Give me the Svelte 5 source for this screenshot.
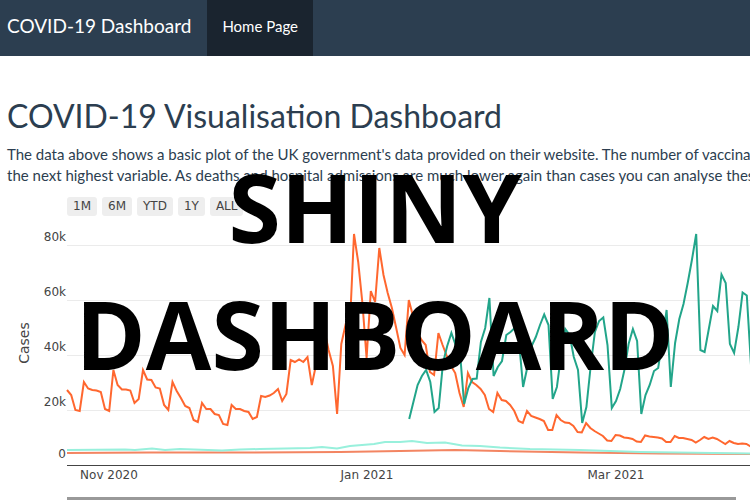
<script>
  const ranges = ['1M', '6M', 'YTD', '1Y', 'ALL'];
  const gridLines = [
    { y: 245, label: '80k' },
    { y: 300, label: '60k' },
    { y: 355, label: '40k' },
    { y: 410, label: '20k' }
  ];
  const months = [
    { x: 109, label: 'Nov 2020' },
    { x: 367, label: 'Jan 2021' },
    { x: 616, label: 'Mar 2021' }
  ];

  // daily readings, one every DAY units along the axis
  const DAY = 4.22;
  const line = (start, values) =>
    values.map((v, i) => `${(start + i * DAY).toFixed(1)},${v}`).join(' ');

  const cases = line(67, [
    390, 395, 410, 411, 382, 388.5, 390, 390.5, 392, 409, 411, 370, 385, 389.5,
    389.5, 390.5, 403, 399, 370, 379.5, 380, 387.5, 388.5, 405, 410, 382, 391,
    398, 406, 408, 420, 422, 403, 409, 409, 414, 415, 424, 425, 405, 409, 409,
    411, 412, 419, 417, 396, 397, 395.5, 393, 389, 401, 394, 360, 362, 359.5,
    362, 357, 385, 365, 322, 330, 350, 366, 414, 344, 325, 330, 234, 262, 303,
    358, 291, 302, 248, 275, 293, 308, 328, 348, 355, 300, 316, 332, 340,
    345, 372, 375, 333, 345, 356, 366, 373, 393, 407, 373, 382, 385, 389, 395,
    409, 412, 393, 400, 401, 405, 411, 421, 423, 411, 416, 417.5, 419, 421, 430,
    430, 415, 420, 422.5, 423, 426, 432, 432.5, 423, 428, 431, 433.5, 436,
    440.5, 441, 435, 435.5, 437.5, 438, 439, 441.5, 442, 435.5, 436.5, 437,
    437.5, 438.5, 442, 442, 436, 438, 438, 439, 440, 442.5, 440, 437, 439,
    437.5, 439, 441.5, 444, 441, 443, 444, 443.5, 444, 446.5
  ]);

  const vaccinations = line(409.2, [
    419, 402, 385, 376, 370, 382, 412, 408, 363, 346, 333, 345, 350, 404, 388,
    379, 378.5, 342, 328, 298, 376, 367, 361, 335, 332, 328, 340, 387, 367, 346,
    337, 325, 314.5, 325, 399, 387, 355, 329, 335, 357, 370, 423, 407, 366,
    332, 321, 317.5, 345, 408, 401, 389, 370, 344, 329, 341, 414, 395, 385, 371,
    368, 340, 310, 387, 343, 319, 304, 283, 260, 234, 350, 352, 329, 306, 311,
    274.5, 283, 344, 353, 327, 292.5, 295.5, 365
  ]);

  const admissions =
    '67,450 125,449.5 135,450 152,448.5 165,450 180,449 222,450.5 240,449.5 260,449 310,448 322,447 337,448.5 350,446 362,445 374,444 385,442 400,442 412,441 427,443 445,442.5 462,445.5 480,446 500,447.5 530,449 580,450 640,452 750,453.5';
  const deaths = '67,453 150,452.5 250,452.5 340,452 400,451 455,450 500,451 580,452.5 660,453.5 750,454';
</script>

<div class="page">
  <nav>
    <a class="brand" href="#top">COVID-19 Dashboard</a>
    <a class="tab" href="#home">Home Page</a>
  </nav>

  <main>
    <h1>COVID-19 Visualisation Dashboard</h1>
    <p>
      The data above shows a basic plot of the UK government's data provided on their website. The number of vaccinations<br />
      the next highest variable. As deaths and hospital admissions are much lower again than cases you can analyse these
    </p>

    <div class="ranges">
      {#each ranges as range}
        <button type="button">{range}</button>
      {/each}
    </div>

    <svg class="chart" viewBox="0 216 750 284" preserveAspectRatio="xMinYMin slice" role="img" aria-label="Cases over time">
      {#each gridLines as g}
        <rect x="67" y={g.y} width="683" height="1" fill="#ebebeb" />
        <text x="66" y={g.y - 4} text-anchor="end">{g.label}</text>
      {/each}
      <text x="66" y="458" text-anchor="end">0</text>
      <text class="axis" transform="translate(29 343) rotate(-90)" text-anchor="middle">Cases</text>

      <polyline points={deaths} stroke="#f38562" />
      <polyline points={admissions} stroke="#98f0dc" />
      <polyline points={cases} stroke="#ff672f" />
      <polyline points={vaccinations} stroke="#22a58a" />

      <rect x="67" y="465" width="683" height="1" fill="#444" />
      {#each months as m}
        <text x={m.x} y="479" text-anchor="middle">{m.label}</text>
      {/each}
      <rect x="67" y="497" width="669" height="3" fill="#999" />
    </svg>
  </main>

  <div class="caption">SHINY<br />DASHBOARD</div>
</div>

<style>
  :global(body) {
    margin: 0;
    background: #fff;
  }
  .page {
    position: relative;
    overflow: hidden;
    color: #2c3e50;
    font: 15px/21px Lato, sans-serif;
  }
  nav {
    display: flex;
    height: 56px;
    background: #2c3e50;
  }
  nav a {
    display: flex;
    align-items: center;
    color: #fff;
    text-decoration: none;
  }
  .brand {
    padding: 0 16px 5px 7px;
    font-size: 19px;
  }
  .tab {
    padding: 0 15px 4px;
    background: #1a242f;
  }
  main {
    padding-top: 40px;
  }
  h1 {
    margin: 0 7px 8px;
    font-size: 32px;
    line-height: 40px;
    font-weight: 400;
  }
  p {
    margin: 0 0 11px 7px;
    white-space: nowrap;
  }
  .ranges {
    display: flex;
    gap: 5px;
    padding-left: 67px;
  }
  button {
    height: 19px;
    padding: 0 6px;
    border: 0;
    border-radius: 3px;
    background: #eee;
    color: #444;
    font: 12px/17px "DejaVu Sans", Verdana, sans-serif;
  }
  .chart {
    display: block;
    width: 100%;
  }
  .chart text {
    fill: #444;
    font: 12px "DejaVu Sans", Verdana, sans-serif;
  }
  .chart .axis {
    font-size: 14px;
  }
  polyline {
    fill: none;
    stroke-width: 2;
  }
  .caption {
    position: absolute;
    top: 143px;
    left: 0;
    right: 0;
    text-align: center;
    color: #000;
    font: 700 95px/127px "Open Sans", "Noto Sans", sans-serif;
    pointer-events: none;
  }
</style>
